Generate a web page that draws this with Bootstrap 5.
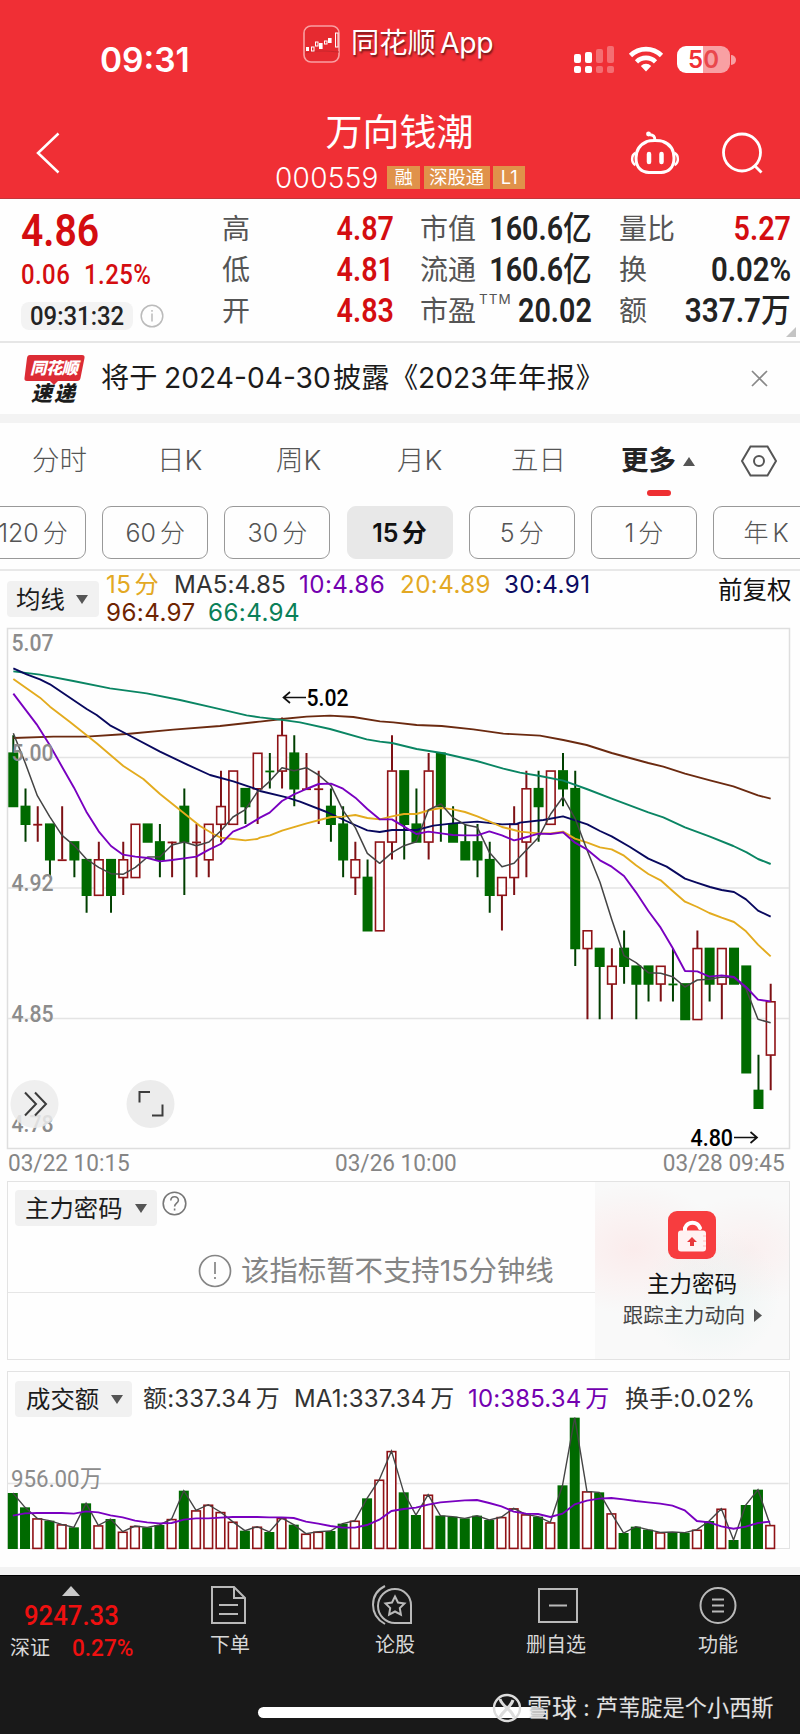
<!DOCTYPE html>
<html lang="zh-CN">
<head>
<meta charset="utf-8">
<meta name="viewport" content="width=device-width, initial-scale=1">
<title>万向钱潮 000559</title>
<link href="https://cdn.jsdelivr.net/npm/bootstrap@5.3.0/dist/css/bootstrap.min.css" rel="stylesheet">
<style>
body{width:800px;height:1734px;overflow:hidden;background:#fefefe;color:#222;font-family:Inter,"Noto Sans CJK SC",sans-serif;line-height:1;white-space:nowrap}
svg{display:block;flex:none;overflow:visible}
.din{display:inline-block;font-family:Roboto,"Noto Sans CJK SC",sans-serif;transform:scaleX(.87);transform-origin:left center}
.din-r{transform-origin:right center}
.topbar{height:199px;background:#f02f35;border-bottom:1px solid #c4363b;color:#fff}
.status{height:100px;padding-left:100px}
.clock{width:203px;margin-top:43px;font-size:33.5px;font-weight:600;line-height:34px;letter-spacing:0}
.brand{width:271px;margin-top:25px;height:37px;font-size:28.3px;text-shadow:1px 2px 2px rgba(0,0,0,.55)}
.batt{width:53px;height:27px;border-radius:9px;background:linear-gradient(90deg,#fff 50%,#f8a0a3 50%);color:#f02f35;font-size:24px;font-weight:600}
.stockname{font-size:37px;line-height:40px;height:40px}
.code{font-size:28px;font-weight:300;letter-spacing:.3px;line-height:24px;margin-right:9px;width:103px}
.tag{height:23px;background:#e0924a;font-size:18.300px;line-height:23px;padding:0 5.5px;margin-right:3.5px;color:#fff}
.quote{height:144px;border-bottom:2px solid #e6e6e6;padding:10px 9px 0 21px}
.up{color:#d40d10}
.stat{height:40.7px;color:#555;font-size:28px}
.stat .din{font-size:33px;font-weight:600;line-height:40px}
.stat .din small{font-size:33px;font-weight:500}
.ink{color:#232323}
.pill-time{width:112px;height:28px;border-radius:8px;background:#f3f3f3;padding-left:9px}
.notice{height:71px;font-size:28.200px;color:#1b1b1b}
.notice span{flex:none}
.band{height:9px;background:#f3f3f3}
.tabs{height:76px;font-size:27.5px;color:#555;font-weight:300}
.tabs span{flex:none}
.tf{height:72px;margin-left:-20px;gap:16.2px;border-bottom:2px solid #e8e8e8;padding-top:7px}
.tf-btn{flex:none;width:106px;height:53px;border:1px solid #999;border-radius:9px;font-size:25px;color:#555;line-height:52px;text-align:center;word-spacing:-3px;font-weight:300}
.tf-on{background:#e8e8e8;border-color:#e8e8e8;color:#111;font-weight:600}
.drop{background:#f1f1f1;border-radius:4px;height:36px;font-size:24.4px;color:#1c1c1c}
.caret{width:0;height:0;border:6px solid transparent;border-top:9px solid #555;border-bottom:0}
.legend-ma{font-size:24.2px;line-height:28.4px;color:#333;letter-spacing:.4px}
.legend-ma span{display:inline-block}
.plot{height:523px}
.plot text,.vol text{font-family:Roboto,"Noto Sans CJK SC",sans-serif}
.dates{height:31px;font-size:24px;color:#858585;padding:0 15px 0 8px}
.dates .din{transform:scaleX(.94);line-height:27px}
.locked{width:783px;height:179px;margin-left:7px;border:1.5px solid #e3e3e3}
.promo{width:194px;background:radial-gradient(ellipse at 20% 38%,rgba(255,205,205,.3),transparent 42%),radial-gradient(ellipse at 80% 38%,rgba(255,190,190,.16),transparent 35%),radial-gradient(ellipse at 60% 64%,rgba(205,235,230,.3),transparent 42%),#f9f9f9}
.hint{font-size:28.4px;color:#858585}
.volbox{width:783px;height:178px;margin:11px 0 0 7px;border:1.5px solid #e3e3e3}
.vlegend{font-size:24px;color:#333;word-spacing:-3px;letter-spacing:.15px}
.vlegend span{flex:none}
.dock{height:159px;background:#191919;color:#d8d8d8;font-size:20px;border-top:1px solid #000}
.dock svg{stroke:#b9b9b9;fill:none;stroke-width:2}
.dock-item{width:80px}
.homebar{position:absolute;left:258px;top:131px;width:287px;height:11px;border-radius:6px;background:#fff}
.sign{position:absolute;left:492px;top:118px;height:28px;color:#e2e2e2;font-size:22.200px;text-shadow:0 0 2px #333}
</style>
</head>
<body>
<header class="topbar">
  <div class="status d-flex align-items-start">
    <div class="clock">09:31</div>
    <div class="brand d-flex align-items-center">
      <svg width="38" height="38" viewBox="0 0 38 38" class="me-2"><rect x="1" y="1" width="35" height="36" rx="7" fill="#e62a30" stroke="#f9a0a2" stroke-width="1.6"/><path d="M2 28c12-3 22-2 34-1" stroke="#c8262b" fill="none"/><g fill="#fff"><rect x="3" y="22" width="3" height="4"/><rect x="16" y="18" width="3.6" height="6"/><rect x="25" y="13" width="3.6" height="5"/></g><g fill="none" stroke="#fff"><rect x="8.500" y="22" width="2.500" height="4"/><rect x="12.500" y="17" width="2.500" height="4"/><rect x="21.500" y="16" width="2.500" height="3"/><rect x="32.500" y="8" width="2.500" height="14"/></g></svg>
      <span style="margin-left:2px">同花顺</span><span class="ms-1" style="letter-spacing:-.3px">App</span>
    </div>
    <svg width="41" height="28" viewBox="0 0 41 28" style="margin-top:46px" fill="#fff"><rect x="0" y="8" width="7" height="9" rx="2"/><rect x="11" y="6" width="7" height="11" rx="2"/><rect x="0" y="20" width="7" height="7" rx="2"/><rect x="11" y="20" width="7" height="7" rx="2"/><g opacity=".3"><rect x="22" y="3" width="7" height="14" rx="2"/><rect x="33" y="0" width="7" height="17" rx="2"/><rect x="22" y="20" width="7" height="7" rx="2"/><rect x="33" y="20" width="7" height="7" rx="2"/></g></svg>
    <svg width="36" height="26" viewBox="0 0 36 26" style="margin:46px 0 0 13px" fill="none" stroke="#fff" stroke-width="4.600"><path d="M2.500 9.500a22 22 0 0 1 31 0M8.500 15.800a13.500 13.500 0 0 1 19 0"/><path d="M18 25.500l-5.200-5.600a7.500 7.500 0 0 1 10.400 0z" fill="#fff" stroke="none"/></svg>
    <div class="batt d-flex align-items-center justify-content-center" style="margin:46px 0 0 13px"><span>5</span><span style="color:#e9474c">0</span></div>
    <svg width="6" height="10" style="margin:55px 0 0 1px"><path d="M0 0a5 5 0 0 1 0 10z" fill="#f8a0a3"/></svg>
  </div>
  <div class="d-flex align-items-start" style="padding-left:36px">
    <svg width="24" height="42" viewBox="0 0 24 42" style="margin-top:32px" fill="none" stroke="#fff" stroke-width="2.500"><path d="M22.500 1.500L2 21l20.500 19.500"/></svg>
    <div style="width:215px"></div>
    <div style="width:253px;margin-top:13px">
      <div class="stockname" style="padding-left:50.500px">万向钱潮</div>
      <div class="d-flex" style="margin-top:13px"><span class="code">000559</span><span class="tag" style="padding:0 7.500px">融</span><span class="tag">深股通</span><span class="tag" style="padding:0 7.500px">L1</span></div>
    </div>
    <svg width="50" height="46" viewBox="0 0 50 46" style="margin:30px 0 0 102px" fill="none" stroke="#fff" stroke-width="3"><path d="M17 11.500C20 10 30 10 33 11.500c8 3 11 9 11 16.500 0 10-6 14-13 14.500H19C12 42 6 38 6 28c0-8 4-13.500 11-16.500z"/><path d="M5.500 23c-4.500 2-4.500 10 0 12M44.500 23c4.500 2 4.500 10 0 12" stroke-width="2.500"/><path d="M25 11c0-5-1.500-6-6-6.500"/><circle cx="18.500" cy="4" r="2.400" fill="#fff" stroke="none"/><path d="M19 24v8M31.500 24v8" stroke-width="4.500" stroke-linecap="round"/></svg>
    <svg width="43" height="42" viewBox="0 0 43 42" style="margin:32px 0 0 41px" fill="none" stroke="#fff" stroke-width="2.800"><circle cx="21" cy="20.500" r="18.500"/><path d="M33.500 33.500l7 7"/></svg>
  </div>
</header>

<section class="quote d-flex position-relative">
  <div style="width:201px">
    <div class="din up d-block" style="font-size:45px;font-weight:600;height:49px;line-height:43px">4.86</div>
    <div class="din up d-flex" style="font-size:27.5px;font-weight:500;line-height:33px;height:44px;width:190px;letter-spacing:.5px"><span style="width:72.500px">0.06</span><span>1.25%</span></div>
    <div class="d-flex align-items-center"><div class="pill-time ink"><span class="din" style="font-size:26px;font-weight:500;line-height:28px;transform:scaleX(.92)">09:31:32</span></div>
      <svg width="24" height="24" viewBox="0 0 24 24" style="margin-left:7px"><circle cx="12" cy="12" r="10.800" fill="none" stroke="#bbb" stroke-width="1.500"/><path d="M12 9.500v8M12 6v1.800" stroke="#bbb" stroke-width="1.500"/></svg></div>
  </div>
  <div style="width:172px">
    <div class="stat d-flex justify-content-between align-items-center">高<span class="din din-r up">4.87</span></div>
    <div class="stat d-flex justify-content-between align-items-center">低<span class="din din-r up">4.81</span></div>
    <div class="stat d-flex justify-content-between align-items-center">开<span class="din din-r up">4.83</span></div>
  </div>
  <div style="width:172px;margin-left:26px">
    <div class="stat d-flex justify-content-between align-items-center">市值<span class="din din-r ink" style="margin-left:-20px">160.6<small>亿</small></span></div>
    <div class="stat d-flex justify-content-between align-items-center">流通<span class="din din-r ink" style="margin-left:-20px">160.6<small>亿</small></span></div>
    <div class="stat d-flex justify-content-between align-items-center"><span>市盈<sup style="font-size:13.500px;letter-spacing:1px;top:-17px;margin-left:3px">TTM</sup></span><span class="din din-r ink" style="margin-left:-20px">20.02</span></div>
  </div>
  <div style="width:172px;margin-left:27px">
    <div class="stat d-flex justify-content-between align-items-center">量比<span class="din din-r up">5.27</span></div>
    <div class="stat d-flex justify-content-between align-items-center">换<span class="din din-r ink" style="transform:scaleX(.89)">0.02%</span></div>
    <div class="stat d-flex justify-content-between align-items-center">额<span class="din din-r ink" style="transform:scaleX(.9)">337.7<small>万</small></span></div>
  </div>
  <svg width="10" height="10" class="position-absolute" style="right:4px;bottom:4px"><path d="M10 0v10H0z" fill="#c4c4c4"/></svg>
</section>

<section class="notice d-flex align-items-center">
  <svg width="62" height="50" viewBox="0 0 62 50" style="margin-left:24px"><path d="M4 1h54q3 0 2.500 3l-4 20q-.5 3-3.500 3H34l-4 4-4-4H3q-3 0-2.500-3L3 4q.4-3 3-3z" fill="#dc2c35"/><g font-family="Noto Sans CJK SC" font-weight="900" font-style="italic"><text x="6" y="20" font-size="16.500" fill="#fff" textLength="48">同花顺</text><text x="7" y="47" font-size="21" fill="#1c1c1c" textLength="44">速递</text></g></svg>
  <div class="d-flex align-items-center" style="margin-left:15px;width:510px"><span style="width:63px">将于</span><span style="width:169px">2024-04-30</span><span style="width:57px">披露</span><span style="width:28px">《</span><span style="width:71px">2023</span><span style="letter-spacing:.7px">年年报》</span></div>
  <svg width="17" height="17" viewBox="0 0 17 17" style="margin-left:140px"><path d="M1 1l15 15M16 1L1 16" stroke="#888" stroke-width="1.700"/></svg>
</section>
<div class="band"></div>

<nav class="tabs d-flex align-items-center">
  <span style="width:125px;margin-left:32px">分时</span><span style="width:119px">日K</span><span style="width:121px">周K</span><span style="width:114px">月K</span><span style="width:110px">五日</span>
  <span class="position-relative ink fw-bold" style="width:62px">更多<i class="position-absolute" style="left:26px;top:43px;width:24px;height:6px;border-radius:3px;background:#ee2f32"></i></span>
  <span class="caret" style="transform:rotate(180deg)"></span>
  <svg width="36" height="32" viewBox="0 0 36 32" style="margin-left:46px" fill="none" stroke="#555" stroke-width="2"><path d="M9.500 1.500h17L35 16l-8.500 14.500h-17L1 16z"/><circle cx="18" cy="16" r="5"/></svg>
</nav>
<div class="tf d-flex">
  <div class="tf-btn">120 分</div><div class="tf-btn">60 分</div><div class="tf-btn">30 分</div><div class="tf-btn tf-on">15 分</div><div class="tf-btn">5 分</div><div class="tf-btn">1 分</div><div class="tf-btn">年 K</div>
</div>

<div class="d-flex align-items-start" style="height:56px">
  <div class="drop d-flex align-items-center" style="width:92px;margin:10px 0 0 7px;padding-left:9px">均线<i class="caret" style="margin-left:11px"></i></div>
  <div class="legend-ma" style="width:619px;padding-left:7px">
    <div class="d-flex"><span style="width:68px;color:#e3a823;word-spacing:-4px">15 分</span><span style="width:125px;letter-spacing:.1px">MA5:4.85</span><span style="width:101px;color:#7300b0">10:4.86</span><span style="width:104px;color:#e3a823">20:4.89</span><span style="color:#0b0b62">30:4.91</span></div>
    <div class="d-flex"><span style="width:102px;color:#6e2400">96:4.97</span><span style="color:#0a8058">66:4.94</span></div>
  </div>
  <div style="font-size:24.500px;margin-top:7px;color:#111">前复权</div>
</div>

<svg class="plot" id="kline" width="800" height="523" viewBox="0 627 800 523"></svg>
<div class="dates d-flex justify-content-between"><span class="din">03/22 10:15</span><span class="din" style="margin-left:7px">03/26 10:00</span><span class="din din-r">03/28 09:45</span></div>

<section class="locked d-flex position-relative">
  <div style="width:587px">
    <div class="d-flex flex-column" style="height:111px;border-bottom:1.500px solid #e6e6e6">
      <div class="d-flex align-items-start" style="margin:8px 0 0 7px"><div class="drop d-flex align-items-center" style="width:142px;padding-left:10px">主力密码<i class="caret" style="margin-left:12px"></i></div>
      <svg width="25" height="25" viewBox="0 0 25 25" style="margin:1px 0 0 5px" fill="none" stroke="#777" stroke-width="1.600"><circle cx="12.500" cy="12.500" r="11.300"/><path d="M8.800 9.600c0-5 7.600-5 7.600-.4 0 3-3.800 3-3.800 6.400M12.600 17.500v2"/></svg></div>
      <div class="hint d-flex align-items-center" style="margin:28px 0 0 190px"><svg width="34" height="34" viewBox="0 0 34 34" fill="none" stroke="#858585" stroke-width="1.700" class="me-2"><circle cx="17" cy="17" r="15.500"/><path d="M17 8v12M17 23v2"/></svg><span style="margin-left:1px">该指标暂不支持15分钟线</span></div>
    </div>
  </div>
  <div class="promo d-flex flex-column align-items-center">
    <svg width="48" height="48" viewBox="0 0 48 48" style="margin-top:29px"><rect width="48" height="48" rx="9" fill="#f73d3f"/><path d="M17 22v-5a8 8 0 0 1 15 0" fill="none" stroke="#fff" stroke-width="4" stroke-linecap="round"/><rect x="10" y="19.500" width="28" height="21" rx="3" fill="#fff2f2"/><path d="M24 26l5 5h-3v4h-4v-4h-3z" fill="#e8393c"/><path d="M35 25h3M35 30h3M35 35h3" stroke="#fbb" stroke-width="1"/></svg>
    <div style="font-size:22.500px;color:#111;margin-top:14px">主力密码</div>
    <div style="font-size:20.400px;color:#444;margin:10px 16px 0 0" class="d-flex align-items-center position-relative">跟踪主力动向<svg width="8" height="13" class="position-absolute" style="left:131px"><path d="M0 0l8 6.500L0 13z" fill="#555"/></svg></div>
  </div>
</section>

<section class="volbox">
  <div class="vlegend d-flex align-items-center" style="padding:11px 0 0 7px;height:43px">
    <div class="drop d-flex align-items-center" style="width:117px;padding-left:11px;margin-right:11px;letter-spacing:0">成交额<i class="caret" style="margin-left:12px"></i></div>
    <span style="width:151px">额:337.34 万</span><span style="width:174px">MA1:337.34 万</span><span style="width:157px;color:#7300b0">10:385.34 万</span><span>换手:0.02%</span>
  </div>
  <svg class="vol" id="vol" width="780" height="134" viewBox="8.500 1415 780 134"></svg>
</section>
<div style="height:18px"></div>
<div class="band" style="height:8px"></div>

<footer class="dock position-relative">
  <div class="d-flex">
    <div style="width:190px;height:92px">
      <svg width="18" height="10" style="margin:10px 0 0 62px;stroke:none"><path d="M9 0l9 10H0z" fill="#c9c9c9"/></svg>
      <div class="din d-block" style="color:#ee1010;font-size:27.500px;font-weight:500;margin:5px 0 0 24px;line-height:29px;width:120px;transform:scaleX(.935)">9247.33</div>
      <div class="d-flex align-items-center" style="margin:4px 0 0 10px;height:28px"><span style="width:62px">深证</span><span class="din" style="font-size:24px;font-weight:500;color:#ee1010;transform:scaleX(.94)">0.27%</span></div>
    </div>
    <div class="dock-item d-flex flex-column align-items-center"><svg width="38" height="40" viewBox="0 0 38 40" style="margin:9px 0 0 -3px"><path d="M2 2h22l11 11v25H2zM24 2v11h11M9 20h19M9 29h19"/></svg><div style="margin-top:10px">下单</div></div>
    <div class="dock-item d-flex flex-column align-items-center" style="margin-left:85px"><svg width="44" height="40" viewBox="0 0 44 40" style="margin:9px 0 0 -4px"><path d="M24 4a17 17 0 0 0 0 34h16V20A16 16 0 0 0 24 4z"/><path d="M14 1C-2 9-2 30 14 39"/><path d="M24 11.500l3 6 6.500 1-4.700 4.600 1.100 6.500-5.900-3.100-5.900 3.100 1.100-6.500-4.700-4.600 6.500-1z"/></svg><div style="margin-top:10px">论股</div></div>
    <div class="dock-item d-flex flex-column align-items-center" style="margin-left:81px"><svg width="40" height="40" viewBox="0 0 40 40" style="margin:9px 0 0 3px"><path d="M1 4h38v33H1zM11 20.500h18"/></svg><div style="margin-top:10px">删自选</div></div>
    <div class="dock-item d-flex flex-column align-items-center" style="margin-left:82px"><svg width="40" height="40" viewBox="0 0 40 40" style="margin:9px 0 0"><circle cx="20" cy="20.500" r="17.500"/><path d="M14 14.500h12M14 20.500h12M14 26.500h12"/></svg><div style="margin-top:10px">功能</div></div>
  </div>
  <div class="homebar"></div>
  <div class="sign d-flex align-items-center"><svg width="30" height="30" viewBox="0 0 30 30" style="stroke:#dcdcdc;stroke-width:2.400"><circle cx="15" cy="15" r="13"/><path d="M8 6c2 8 12 10 14 18M21 7c-2 7-9 10-13 17" stroke-width="3"/></svg><b class="fw-normal" style="font-size:25px;margin-left:5px">雪球</b><span style="width:19px;text-align:center">:</span><span>芦苇腚是个小西斯</span></div>
</footer>

<script>
const GREEN = '#006a00', RED = '#8f1216';
const cx = i => 13.3 + 12.216 * i;
const py = u => 753 + 17.75 * u;

// [colour, body top, body bottom, high, low], counted in cents below 5.00
const candles = [
'G',0,3,-1,3,'G',3,4,2,5,'R',4,4,3,5,'G',4,6,4,7,'R',6,6,3,6,'G',5,6,5,7,'G',6,8,6,9,'R',6,8,5,8,'G',6,8,6,9,'R',6,7,5,8,
'R',4,7,4,7,'G',4,5,4,5,'G',5,6,4,7,'R',5,5,5,7,'G',3,5,2,8,'R',5,5,4,7,'R',4,6,4,7,'R',3,4,1,5,'R',1,4,1,4,'G',2,3,2,4,
'R',0,2,0,4,'G',1,1,0,2,'R',-1,1,-2,2,'G',0,2,-1,3,'R',2,2,0,2,'R',2,2,1,4,'G',3,4,2,5,'G',4,6,3,7,'R',6,7,5,8,'G',7,10,6,10,
'R',5,10,5,10,'R',1,5,-1,6,'G',1,4,1,6,'G',4,5,2,5,'R',1,5,0,6,'G',0,3,0,5,'G',4,5,3,5,'G',5,6,4,6,'G',5,6,4,7,'G',6,8,5,9,
'R',7,8,7,10,'R',4,7,3,8,'R',2,5,1,7,'G',2,3,1,5,'R',1,4,1,4,'G',1,2,0,3,'G',2,11,1,12,'R',10,11,10,15,'G',11,12,11,15,'R',12,13,11,15,
'G',11,12,10,13,'G',12,13,12,15,'G',12,13,12,14,'R',12,13,12,14,'G',13,13,11,14,'G',13,15,13,15,'R',11,15,10,15,'G',11,13,11,14,'R',11,13,11,15,'G',11,13,11,13,
'G',12,18,12,18,'G',19,20,17,20,'R',14,17,13,19];

// Moving averages: three panes [originX, originY], points in thirds of a pixel
const panes = [[0,630],[260,680],[520,740]];
const averages = {
'#6b2a10':[[40,324,160,320,260,320,380,312,520,299,660,288,778,275],[0,125,66,117,140,110,210,107,280,111,360,124,400,127,470,135,545,138,640,148,730,161],[60,-13,130,0,200,15,275,39,385,69,430,80,495,101,570,121,640,139,714,166,752,176]],
'#0a8563':[[40,124,120,134,220,153,330,175,440,190,540,210,640,233,740,256],[0,112,60,119,120,127,210,147,320,178,360,185,396,189,470,207,545,219,650,243,730,266],[0,98,60,108,130,122,200,147,275,176,385,217,430,232,495,262,570,290,640,318,680,337,714,357,752,372]],
'#08085e':[[40,115,80,133,120,148,150,163,260,237,290,255,330,286,380,312,480,365,560,403,630,435,700,454,770,478],[0,333,80,352,120,365,200,396,285,435,322,451,359,456,396,450,470,450,520,437,579,430,652,425,726,433,770,432],[0,248,70,240,129,229,202,253,240,273,275,289,330,321,385,356,440,380,495,416,530,428,570,441,605,450,642,456,678,478,714,512,752,530]],
'#e3ab1e':[[40,147,120,203,150,230,210,276,290,340,370,408,430,447,480,492,540,540,600,588,640,612,662,623,700,627,736,631,772,627],[0,473,30,466,66,452,140,430,213,411,249,410,286,405,322,414,359,418,396,409,432,402,469,402,510,390,543,384,579,388,615,396,652,409,688,424,726,441,762,450],[0,275,56,280,92,280,129,275,165,296,202,308,240,322,275,328,312,347,348,376,385,402,422,421,458,453,495,485,532,501,568,519,605,533,642,546,678,574,714,614,752,649]],
'#444':[[40,310,76,400,112,497,149,560,186,616,222,646,259,687,296,712,333,731,369,733,406,712,443,681,480,680,516,645,552,636,589,647,627,636,662,603,699,561,736,539,772,486],[0,330,29,304,66,263,102,272,139,263,176,285,213,317,249,391,286,443,322,520,359,550,396,518,432,497,469,485,505,390,543,372,579,413,615,434,652,442,688,517,726,560,762,550],[0,350,56,292,92,222,129,171,165,235,202,332,240,427,275,538,312,647,348,668,385,698,422,700,458,710,495,741,532,720,568,718,605,711,642,713,678,746,714,838,752,848]],
'#7900c0':[[40,191,110,283,149,345,186,410,222,473,259,545,296,604,333,648,369,674,406,680,443,684,480,694,516,690,552,685,589,680,627,659,662,642,699,605,736,590,772,568],[0,413,29,398,66,363,102,343,139,327,176,312,213,311,249,326,286,353,322,387,359,418,396,418,432,440,469,462,505,455,543,460,579,465,615,466,652,466,688,454,726,466,762,481],[0,297,56,281,92,282,129,277,165,308,202,329,240,361,275,380,312,408,348,457,385,513,422,563,458,624,495,693,532,694,568,710,605,706,642,711,678,741,714,779,752,784]]
};

let k = '<rect x="7.500" y="628.500" width="782" height="520" fill="none" stroke="#dedede" stroke-width="1.500"/>' +
  '<path d="M8 757.500H789M8 888H789M8 1018.500H789" stroke="#e4e4e4" stroke-width="1.500"/>';
for (let i = 0; i < 63; i++) {
  const [c, t, b, h, l] = candles.slice(i * 5, i * 5 + 5), x = cx(i), col = c === 'G' ? GREEN : RED;
  const wick = c === 'G' ? '#003f00' : '#7d1014';
  if (h < t) k += `<path d="M${x} ${py(h)}V${py(t)}" stroke="${wick}" stroke-width="2"/>`;
  if (l > b) k += `<path d="M${x} ${py(b)}V${py(l)}" stroke="${wick}" stroke-width="2"/>`;
  if (t === b) k += `<path d="M${x - 4.5} ${py(t) + .7}h9" stroke="${col}" stroke-width="1.800"/>`;
  else if (c === 'G') k += `<rect x="${x - 5}" y="${py(t) - .6}" width="10" height="${py(b) - py(t) + 1.6}" fill="${col}"/>`;
  else k += `<rect x="${x - 4.3}" y="${py(t) + .3}" width="8.600" height="${py(b) - py(t)}" fill="#fff" stroke="${col}" stroke-width="1.600"/>`;
}
for (const [col, segs] of Object.entries(averages)) {
  let pts = '';
  segs.forEach((s, n) => { for (let j = 0; j < s.length; j += 2) pts += (panes[n][0] + s[j] / 3) + ',' + (panes[n][1] + s[j + 1] / 3) + ' '; });
  k += `<polyline points="${pts}" fill="none" stroke="${col}" stroke-width="${col === '#444' ? 1.5 : 1.9}" stroke-linejoin="round"/>`;
}
[['5.07', 651], ['5.00', 761], ['4.92', 891], ['4.85', 1022], ['4.78', 1132]].forEach(([t, y]) =>
  k += `<text x="11.500" y="${y}" font-size="24" font-weight="500" fill="#8c8c8c" textLength="42" lengthAdjust="spacingAndGlyphs">${t}</text>`);
k += '<g font-size="23.500" font-weight="500" fill="#000"><text x="306.500" y="706" textLength="42" lengthAdjust="spacingAndGlyphs">5.02</text><text x="690.500" y="1146" textLength="42.500" lengthAdjust="spacingAndGlyphs">4.80</text></g>' +
  '<g fill="none" stroke="#111" stroke-width="1.700"><path d="M306 697.500H284M290 692l-6.500 5.500 6.500 5.500M734 1137.500h22.500M750.500 1132l6.500 5.500-6.500 5.500"/></g>' +
  '<circle cx="34.500" cy="1104" r="24" fill="#ececec" opacity=".85"/><circle cx="150.500" cy="1104" r="24" fill="#ececec"/>' +
  '<g fill="none" stroke="#3c3c3c" stroke-width="2"><path d="M25 1092.500l11 11.500-11 11.500M35 1092.500l11 11.500-11 11.500M139.500 1102.500v-10.500h10.500M152 1115.500h10.500v-11"/></g>';
document.getElementById('kline').innerHTML = k;

// Turnover bars: colour and top edge, in thirds of a pixel under y = 1365
const bars = 'G384 G427 R460 G467 R478 G487 G415 R481 G462 R500 R483 G487 G480 R462 G377 R436 R419 R441 R470 G497 R485 G501 R459 G479 R506 R500 G498 G476 R467 G400 R344 R258 G382 G450 R389 G452 G455 G460 G452 G465 R456 R430 R448 G455 R472 G361 G158 R379 G382 R445 G504 G485 G494 R502 G501 G503 R494 G468 R431 G525 G420 G374 R480'.split(' ');
const ma10 = [452,445,444,444,444,446,439,442,451,457,467,472,475,474,464,460,460,458,456,456,456,457,457,459,470,476,483,488,488,480,464,438,432,428,419,412,409,406,405,414,424,440,446,447,456,446,418,407,401,399,403,408,412,416,422,436,468,472,484,491,485,474,470];
let v = '<path d="M8 1483.500H789" stroke="#e4e4e4" stroke-width="1.500"/>', p1 = '', p10 = '';
bars.forEach((s, i) => {
  const y = 1365 + s.slice(1) / 3, x = cx(i);
  v += s[0] === 'G' ? `<rect x="${x - 5}" y="${y}" width="10" height="${1549 - y}" fill="${GREEN}"/>`
    : `<rect x="${x - 4.3}" y="${y + .6}" width="8.600" height="${1547.8 - y}" fill="#fff" stroke="${RED}" stroke-width="1.600"/>`;
  p1 += x + ',' + y + ' ';
  p10 += x + ',' + (1365 + ma10[i] / 3) + ' ';
});
v += `<polyline points="${p1}" fill="none" stroke="#444" stroke-width="1.400"/><polyline points="${p10}" fill="none" stroke="#7900c0" stroke-width="1.900"/>`;
v += '<text x="11.500" y="1487" font-size="24" font-weight="400" fill="#8c8c8c" textLength="91" lengthAdjust="spacingAndGlyphs">956.00万</text>';
document.getElementById('vol').innerHTML = v;
</script>
<script src="https://cdn.jsdelivr.net/npm/bootstrap@5.3.0/dist/js/bootstrap.bundle.min.js"></script>
</body>
</html>
